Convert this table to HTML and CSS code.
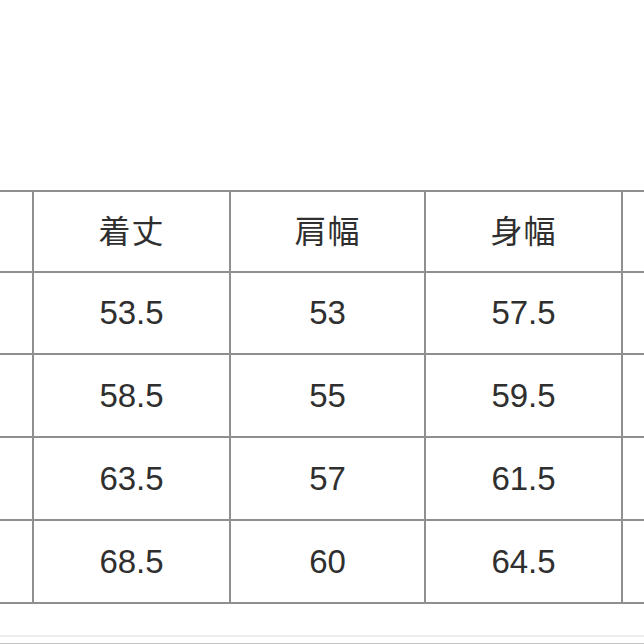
FILE: index.html
```html
<!DOCTYPE html>
<html lang="ja">
<head>
<meta charset="utf-8">
<title>サイズ表</title>
<link rel="stylesheet" href="styles.css">
</head>
<body>
<div class="page">
  <div class="table">
    <div class="cell edge"></div>
    <div class="cell head">着丈</div>
    <div class="cell head">肩幅</div>
    <div class="cell head">身幅</div>
    <div class="cell last"></div>

    <div class="cell edge"></div>
    <div class="cell">53.5</div>
    <div class="cell">53</div>
    <div class="cell">57.5</div>
    <div class="cell last"></div>

    <div class="cell edge"></div>
    <div class="cell">58.5</div>
    <div class="cell">55</div>
    <div class="cell">59.5</div>
    <div class="cell last"></div>

    <div class="cell edge"></div>
    <div class="cell">63.5</div>
    <div class="cell">57</div>
    <div class="cell">61.5</div>
    <div class="cell last"></div>

    <div class="cell edge"></div>
    <div class="cell">68.5</div>
    <div class="cell">60</div>
    <div class="cell">64.5</div>
    <div class="cell last"></div>
  </div>
  <div class="footer-lines"></div>
</div>
</body>
</html>
```

FILE: styles.css
```css
html, body {
  margin: 0;
  padding: 0;
  background: #ffffff;
  overflow: hidden;
}

.page {
  width: 644px;
  height: 644px;
  padding-top: 190px;
  box-sizing: border-box;
  font-family: "Liberation Sans", "Noto Sans CJK JP", Arial, sans-serif;
  color: #2f2f2f;
}

.table {
  display: grid;
  grid-template-columns: 34px 197px 195px 197px 1fr;
  grid-template-rows: 81px 82px 83px 83px 83px;
  border-top: 2px solid #8f8f8f;
}

.cell {
  box-sizing: border-box;
  border-right: 2px solid #8f8f8f;
  border-bottom: 2px solid #8f8f8f;
  display: flex;
  align-items: center;
  justify-content: center;
  font-size: 33px;
  line-height: 1;
  padding-bottom: 1px;
}

.cell.last {
  border-right: none;
}

.cell.head {
  font-family: "Noto Sans CJK JP", "Liberation Sans", sans-serif;
  font-size: 32px;
  letter-spacing: 1px;
  padding-bottom: 6px;
}

.footer-lines {
  margin-top: 31px;
  height: 6px;
  border-top: 2px solid #ededed;
  border-bottom: 1px solid #c4c4c4;
}
```
